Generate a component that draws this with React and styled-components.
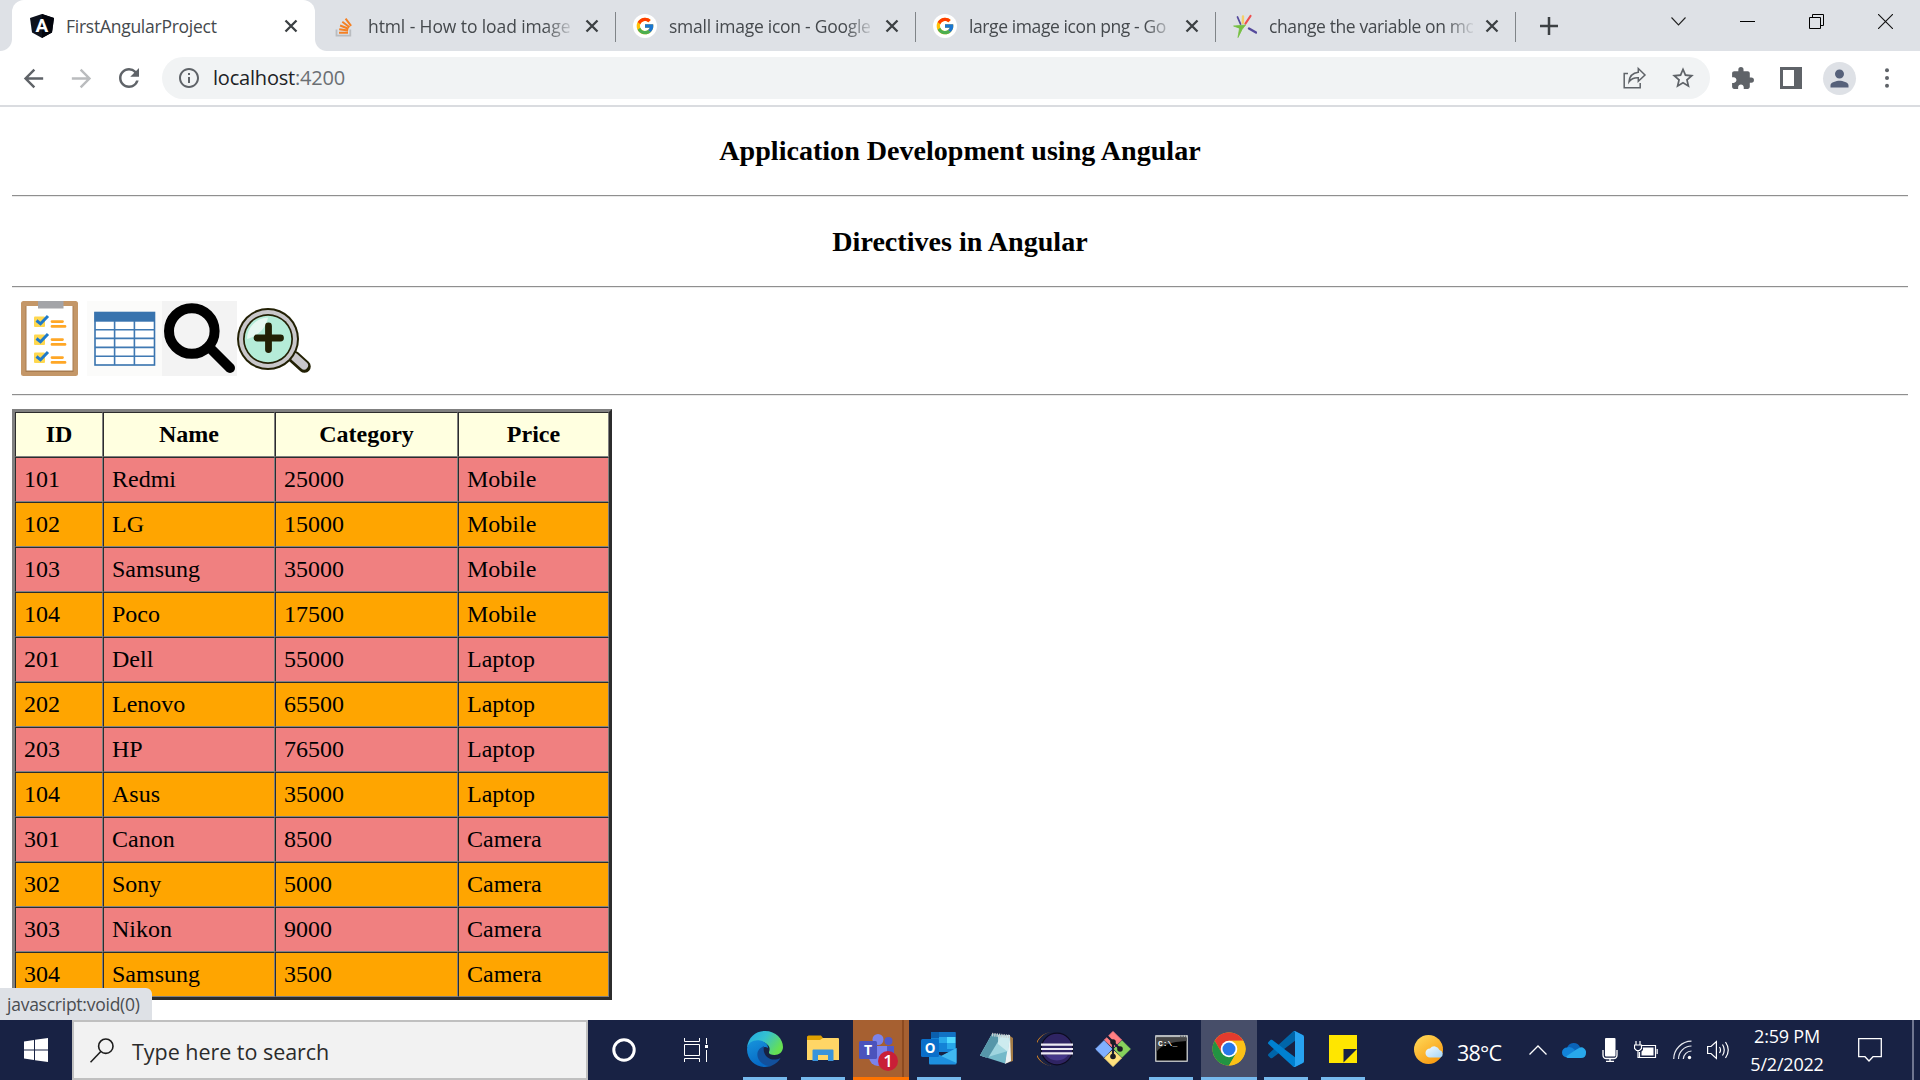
import React from "react";
import styled, { createGlobalStyle } from "styled-components";
import { FcGoogle } from "react-icons/fc";
import {
  MdArrowBack,
  MdArrowForward,
  MdRefresh,
  MdInfoOutline,
  MdStarBorder,
  MdExtension,
  MdPerson,
} from "react-icons/md";

const GlobalStyle = createGlobalStyle`
  * { box-sizing: border-box; }
  html, body { margin: 0; padding: 0; background: #fff; overflow: hidden; }
  svg { display: block; flex: none; }
`;

const ui = `"Open Sans", "Noto Sans", sans-serif`;

const Screen = styled.div`
  width: 1920px;
  height: 1080px;
  display: flex;
  flex-direction: column;
  overflow: hidden;
  font-family: ${ui};
`;

/* ---------- tab strip ---------- */
const TabStrip = styled.header`
  display: flex;
  flex: none;
  height: 51px;
  padding-left: 12px;
  background: #dee1e6;
`;

const ActiveTab = styled.div`
  position: relative;
  display: flex;
  align-items: center;
  width: 303px;
  padding: 0 17px 0 18px;
  gap: 12px;
  background: #fff;
  border-radius: 12px 12px 0 0;
  &::before,
  &::after {
    content: "";
    position: absolute;
    bottom: 0;
    width: 12px;
    height: 12px;
  }
  &::before {
    left: -12px;
    background: radial-gradient(circle at 0 0, #dee1e6 11.5px, #fff 12.5px);
  }
  &::after {
    right: -12px;
    background: radial-gradient(circle at 100% 0, #dee1e6 11.5px, #fff 12.5px);
  }
`;

const Tab = styled.div`
  display: flex;
  align-items: center;
  width: ${(p) => p.$width || 300}px;
  padding: 0 17px;
  gap: 12px;
  background: linear-gradient(#808488, #808488) right 0 top 12px / 1px 30px no-repeat;
`;

const TabTitle = styled.div`
  flex: 1;
  min-width: 0;
  overflow: hidden;
  white-space: nowrap;
  font-size: 17.5px;
  line-height: 26px;
  letter-spacing: ${(p) => p.$spacing || "-0.26px"};
  color: #45494d;
  ${(p) =>
    p.$fade && `mask-image: linear-gradient(to right, #000 calc(100% - 28px), transparent calc(100% + 3px));`}
`;

const NewTab = styled.div`
  display: flex;
  align-items: center;
  padding-left: 24px;
`;

const WindowControls = styled.div`
  display: flex;
  margin-left: auto;
  height: 43px;
`;

const WindowButton = styled.div`
  width: 69px;
  display: flex;
  align-items: center;
  justify-content: center;
`;

/* ---------- toolbar ---------- */
const Toolbar = styled.div`
  display: flex;
  flex: none;
  align-items: center;
  height: 56px;
  padding: 0 9px;
  border-bottom: 2px solid #dadce0;
  background: #fff;
`;

const ToolSlot = styled.div`
  display: flex;
  align-items: center;
  justify-content: center;
  width: ${(p) => p.$width || 48}px;
  color: ${(p) => p.$color || "#5f6368"};
`;

const AddressBar = styled.div`
  display: flex;
  align-items: center;
  width: 1548px;
  height: 42px;
  margin-left: 9px;
  padding: 0 3px 0 15px;
  border-radius: 21px;
  background: #f1f3f4;
  color: #5f6368;
`;

const Url = styled.div`
  flex: 1;
  margin-left: 12px;
  font-size: 20px;
  line-height: 28px;
  letter-spacing: -0.2px;
  color: #6b6f73;
  span { color: #202124; }
`;

const Avatar = styled.div`
  width: 33px;
  height: 33px;
  border-radius: 50%;
  display: flex;
  align-items: center;
  justify-content: center;
  background: #dee1e6;
  color: #56617a;
`;

/* ---------- page ---------- */
const Page = styled.main`
  position: relative;
  flex: 1;
  min-height: 0;
  overflow: hidden;
  padding: 28px 12px 0;
  background: #fff;
  color: #000;
  font-family: "Liberation Serif", "Times New Roman", serif;
`;

const Heading = styled.h3`
  margin: 0;
  height: 32px;
  line-height: 32px;
  font-size: 28.08px;
  text-align: center;
`;

const Rule = styled.hr`
  height: 2px;
  border: 0;
  border-top: 1px solid #8f8f8f;
  border-bottom: 1px solid #eaeaea;
  margin: ${(p) => p.$top}px 0 ${(p) => p.$bottom}px;
`;

const IconRow = styled.div`
  display: flex;
  height: 75px;
`;

const Table = styled.table`
  width: 600px;
  table-layout: fixed;
  border-collapse: separate;
  border-spacing: 0;
  border-style: solid;
  border-width: 3px;
  border-color: #808080 #2c2c2c #2c2c2c #808080;
  font-size: 24px;
`;

const Row = styled.tr`
  height: 45px;
  background: ${(p) => p.$bg};
`;

const cell = `
  border: 1px solid;
  border-color: #2c2c2c #808080 #808080 #2c2c2c;
  padding: 0 8px 1px;
  line-height: 26px;
  height: 45px;
`;
const Th = styled.th`${cell} width: ${(p) => p.$width}px; text-align: center;`;
const Td = styled.td`${cell}`;

const StatusBubble = styled.div`
  position: absolute;
  left: 0;
  bottom: 0;
  width: 152px;
  height: 32px;
  padding-left: 7px;
  border-radius: 0 6px 0 0;
  background: #dee1e6;
  color: #4a4d51;
  font-family: ${ui};
  font-size: 17.5px;
  line-height: 33px;
  letter-spacing: -0.25px;
  white-space: nowrap;
`;

/* ---------- taskbar ---------- */
const Taskbar = styled.footer`
  display: flex;
  flex: none;
  height: 60px;
  background: #182244;
  color: #fff;
`;

const Slot = styled.div`
  display: flex;
  align-items: center;
  justify-content: center;
  width: ${(p) => p.$width}px;
`;

const SearchBox = styled.div`
  display: flex;
  align-items: center;
  width: 516px;
  padding-left: 16px;
  border: 2px solid #c0c0c0;
  background: #f2f2f2;
  color: #2b2b2b;
  font-size: 21.5px;
  letter-spacing: -0.03px;
  gap: 18px;
  span { padding-top: 3px; }
`;

const Apps = styled.div`
  display: flex;
  margin-left: 5px;
`;

const TaskButton = styled.div`
  display: grid;
  grid-template-rows: 57px 3px;
  justify-items: center;
  align-items: center;
  width: 56px;
  margin-right: ${(p) => (p.$tight ? 1 : 2)}px;
  background: ${(p) => p.$bg || "transparent"};
`;

const Underline = styled.div`
  width: ${(p) => p.$width || 44}px;
  height: 3px;
  background: ${(p) => p.$color || "#76b9ed"};
`;

const Weather = styled.div`
  display: flex;
  align-items: center;
  width: 146px;
  padding-left: 41px;
  gap: 12px;
  font-size: 21.5px;
  letter-spacing: -0.8px;
  white-space: nowrap;
  span { padding-top: 5px; }
`;

const Clock = styled.div`
  width: 104px;
  padding: 2px 2px 0 0;
  text-align: center;
  font-size: 18px;
  line-height: 28px;
  letter-spacing: -0.2px;
`;

const DesktopEdge = styled.div`
  width: 8px;
  margin-left: auto;
  border-left: 2px solid #6f7690;
`;

/* ---------- drawings ---------- */
const Cross = () => (
  <svg width="14" height="14" viewBox="0 0 14 14" stroke="#3c4043" strokeWidth="2.3">
    <path d="M1.5 1.5 12.5 12.5M12.5 1.5 1.5 12.5" />
  </svg>
);

const AngularIcon = () => (
  <svg width="24" height="24" viewBox="0 0 24 24">
    <path d="M12 0 24 4 22 18.5 12 24 2 18.5 0 4Z" fill="#0d111c" />
    <path d="M12 0 24 4 22 18.5 12 24Z" fill="#02040c" />
    <text x="12" y="18" fontSize="19" fontWeight="700" fill="#fff" textAnchor="middle" fontFamily="Roboto">A</text>
  </svg>
);

const StackIcon = () => (
  <svg width="24" height="24" viewBox="0 0 24 24" fill="none">
    <path d="M4.5 15.500v6.200h13.800v-6.200" stroke="#b9bcc0" strokeWidth="1.8" />
    <path d="M7 18.700h9M7.200 15.300l8.900 1.300M8.100 11.500l8.400 3.200M10.300 7.800l7.200 5.400M13.600 4.600l5.500 7.200" stroke="#f48024" strokeWidth="2" />
  </svg>
);

const GoogleBadge = styled.div`
  width: 24px;
  height: 24px;
  flex: none;
  border-radius: 50%;
  background: #fff;
  display: flex;
  align-items: center;
  justify-content: center;
`;

const SparkIcon = () => (
  <svg width="24" height="24" viewBox="0 0 24 24" strokeLinecap="round">
    <path d="M4.500 3 7.500 10" stroke="#554a9c" strokeWidth="1.800" />
    <path d="M10 2.500 9.800 9" stroke="#f4d06a" strokeWidth="2.400" />
    <path d="M17.500 2 12.500 9.500" stroke="#ee4f4f" strokeWidth="2.200" />
    <path d="M16 14.500 23 18.500" stroke="#554a9c" strokeWidth="2.400" />
    <path d="M1 12 12.500 11 9 15.500 5 23.500 6.500 14.500Z" fill="#76c043" stroke="#76c043" strokeWidth=".8" />
  </svg>
);

const ShareIcon = () => (
  <svg width="24" height="24" viewBox="0 0 24 24" fill="none" stroke="#5f6368" strokeWidth="1.5">
    <path d="M5 7.500H1.200v14.300h16V17" />
    <path d="M15.300 2.500 22 9l-6.700 6.300v-3.600c-4.300-.2-7.200 1-9.300 4.100.5-5.800 4-8.900 9.300-9.500Z" />
  </svg>
);

const Clipboard = () => (
  <svg width="75" height="75" viewBox="0 0 75 75">
    <rect x="9" y="0" width="57" height="75" rx="2.5" fill="#c49768" />
    <rect x="13.500" y="5" width="48" height="66" fill="#a87c50" />
    <rect x="14.500" y="5" width="46" height="64.500" fill="#fff" />
    <rect x="26" y="0" width="25.500" height="7.500" fill="#a3a4a8" />
    {[0, 18, 36].map((y) => (
      <g key={y} transform={`translate(0 ${y})`} fill="none">
        <rect x="22" y="15.500" width="11" height="10.500" rx="1" fill="#ffd84f" />
        <path d="M24.500 19.500 28.500 22.800 36 15" stroke="#1f7ac9" strokeWidth="3" />
        <path d="M40 20.600h10.500M40 25.400h13" stroke="#ffa726" strokeWidth="2.800" strokeLinecap="round" />
      </g>
    ))}
  </svg>
);

const GridImage = () => (
  <svg width="75" height="75" viewBox="0 0 75 75">
    <rect width="75" height="75" fill="#fbfbfa" />
    <rect x="8" y="11.500" width="59.500" height="52.500" fill="#fff" stroke="#3873ae" strokeWidth="1.600" />
    <rect x="7.500" y="11" width="60.500" height="9.700" fill="#3873ae" />
    <path d="M27.600 20V64M47.400 20V64M8 28.800H68M8 37.400H68M8 46.400H68M8 55.200H68" stroke="#3f79b3" strokeWidth="1.600" />
  </svg>
);

const SearchImage = () => (
  <svg width="75" height="75" viewBox="0 0 75 75" fill="none" stroke="#000">
    <rect width="75" height="75" fill="#f3f3f3" stroke="none" />
    <circle cx="29.800" cy="30" r="22.800" strokeWidth="10" />
    <path d="M48 47 68 67" strokeWidth="10" strokeLinecap="round" />
    <path d="M44 44 52 52" strokeWidth="7" />
  </svg>
);

const ZoomImage = () => (
  <svg width="75" height="75" viewBox="0 0 75 75" fill="none" strokeLinecap="round">
    <path d="M57 56 67.500 65.500" stroke="#222004" strokeWidth="12.500" />
    <path d="M52 51 56 55" stroke="#222004" strokeWidth="6" />
    <path d="M57.500 56 67 64.500" stroke="#c9c7ca" strokeWidth="8" />
    <circle cx="31" cy="38" r="31" fill="#222004" />
    <circle cx="31" cy="38" r="29" fill="#c9c7ca" />
    <circle cx="31" cy="38" r="25" fill="#222004" />
    <circle cx="31" cy="38" r="23.300" fill="#b5ecd8" />
    <path d="M10 38A21.500 21.500 0 0 1 31 16.500C29 27 21 35 10 38Z" fill="#e6f8f1" />
    <path d="M20 37H43.500M31.500 25V48.500" stroke="#222004" strokeWidth="6.800" />
  </svg>
);

const EdgeIcon = () => (
  <svg width="36" height="36" viewBox="0 0 36 36">
    <defs>
      <linearGradient id="edgeTop" x1="0" y1="0" x2="1" y2=".5">
        <stop offset="0" stopColor="#1fa7e6" /><stop offset=".5" stopColor="#35c1d0" /><stop offset="1" stopColor="#66e052" />
      </linearGradient>
      <linearGradient id="edgeLeft" x1="0" y1="0" x2=".4" y2="1">
        <stop offset="0" stopColor="#1794dc" /><stop offset="1" stopColor="#0669c5" />
      </linearGradient>
    </defs>
    <path d="M0 17C1 6 9 0 18 0c11 0 18 8 18 16 0 5-4 8-8.500 8-4 0-6-1.500-5.500-3 2-5-1-8-6-10C9 9 3 11 0 17Z" fill="url(#edgeTop)" />
    <path d="M0 18C1 11 7 8.500 13 9.500c5 1 8 4 8 7.500-5-3-9 2-8 7 1 6 6 11 12 10.500C15 39 0 33 0 18Z" fill="url(#edgeLeft)" />
    <path d="M17 15c-5 2-8 6-6 12 2 5 8 9 14 7.500 4-1.500 7-4.500 8.500-7.500-5 2.500-10 2-13.500-1-3-3-4-7-3-11Z" fill="#12509c" />
  </svg>
);

const FolderIcon = () => (
  <svg width="32" height="27" viewBox="0 0 32 27">
    <path d="M0 1.500 1.500.500H14L16 3V8H0Z" fill="#e0a100" />
    <path d="M0 5H13L16 3H31Q32 3 32 4V25H0Z" fill="#ffd666" />
    <path d="M5.500 26V15.500Q5.500 14.500 6.500 14.500H25.500Q26.500 14.500 26.500 15.500V26H21V20H11V26Z" fill="#3a94db" />
  </svg>
);

const TeamsIcon = () => (
  <svg width="56" height="57" viewBox="0 0 56 57">
    <rect x="49" width="2" height="57" fill="#8c4a20" />
    <circle cx="25" cy="19.500" r="5.500" fill="#7b83eb" />
    <circle cx="35.500" cy="21" r="4" fill="#5059c9" />
    <path d="M29 26H41V37Q38 42 31 40Z" fill="#5059c9" />
    <path d="M16 26H34V37A9 9 0 0 1 16 37Z" fill="#7b83eb" />
    <rect x="6" y="21" width="18" height="18" rx="1.500" fill="#4b53bc" />
    <text x="15" y="35" textAnchor="middle" fontSize="14" fontWeight="700" fill="#fff" fontFamily="Open Sans">T</text>
    <circle cx="35" cy="41" r="10" fill="#c91f37" />
    <text x="35" y="47" textAnchor="middle" fontSize="17" fontWeight="600" fill="#fff" fontFamily="Open Sans">1</text>
  </svg>
);

const OutlookIcon = () => (
  <svg width="36" height="33" viewBox="0 0 36 33">
    <rect x="10" y="0" width="24.500" height="20" rx="1" fill="#1482d6" />
    <path d="M18 5h8v6h-8z" fill="#28a8ea" /><path d="M18 0h16.500v5H18z" fill="#1172c4" />
    <path d="M26 5h8.500v6H26z" fill="#50d9ff" /><path d="M18 11h8v6h-8z" fill="#1482d6" />
    <path d="M26 11h8.500v6H26z" fill="#28a8ea" /><path d="M10 0h8v6h-8z" fill="#0b5fad" />
    <path d="M8 18 21 24 35.500 16V31.500Q35.500 32.500 34 32.500H9Q8 32.500 8 31Z" fill="#1d90df" />
    <path d="M35.500 16V31L20 24Z" fill="#40b8f0" />
    <rect x="0" y="7" width="18" height="18" rx="1.500" fill="#0a6fca" />
    <text x="9" y="21" textAnchor="middle" fontSize="13.500" fontWeight="700" fill="#fff" fontFamily="Open Sans">O</text>
  </svg>
);

const NotepadIcon = () => (
  <svg width="34" height="33" viewBox="0 0 34 33">
    <path d="M30 4 33 6V29L27 31Z" fill="#a37b45" />
    <path d="M30 3 31 29 25 32 27 3Z" fill="#edf2f3" />
    <path d="M12 2 30 4 25 31.500 0 23.500Z" fill="#74b9c9" />
    <path d="M12 2 30 4 28 19 6 25.500 0 23.500Z" fill="#9fd5df" />
    <path d="M12 2 22 3 8 26 0 23.500Z" fill="#377b91" opacity=".7" />
    <path d="M18 3 30 4 28 20 18 12Z" fill="#d8f0f3" opacity=".8" />
    <path d="M12 2.500 30 4.500" stroke="#c9d0d2" strokeWidth="3.500" strokeDasharray="1.300 1" />
  </svg>
);

const EclipseIcon = () => (
  <svg width="36" height="34" viewBox="0 0 36 34">
    <path d="M16 0A18 17 0 0 0 16 34 17 17 0 0 1 16 0Z" fill="#f7941e" />
    <circle cx="20" cy="17" r="15.800" fill="#2f2463" stroke="#0d0b20" strokeWidth="1.200" />
    <path d="M9 23H31A12 9 0 0 1 9 23Z" fill="#453789" />
    <path d="M4 12.600H36M4 17H36M4 21.300H36" stroke="#eeeaf4" strokeWidth="2.200" />
  </svg>
);

const GitIcon = () => (
  <svg width="36" height="36" viewBox="0 0 36 36">
    <g strokeLinejoin="round" strokeWidth="1">
      <path d="M18 .5 26.500 9 18 17 9.500 9Z" fill="#ff7f83" stroke="#ff7f83" />
      <path d="M9 9.700 17 18 9 26.300.7 18Z" fill="#80b0ff" stroke="#80b0ff" />
      <path d="M27 9.700 35.300 18 27 26.300 19 18Z" fill="#87d25c" stroke="#87d25c" />
      <path d="M18 19 26.500 27 18 35.500 9.500 27Z" fill="#ffe17d" stroke="#ffe17d" />
    </g>
    <path d="M12 5 18 11V25M18 11 25 18" stroke="#1b2038" strokeWidth="2.200" fill="none" />
    <g fill="#1b1b24"><circle cx="18" cy="11" r="2.800" /><circle cx="25" cy="18" r="2.800" /><circle cx="18" cy="25.500" r="2.800" /></g>
  </svg>
);

const CmdIcon = () => (
  <svg width="33" height="27" viewBox="0 0 33 27">
    <rect width="33" height="27" rx="1" fill="#b6babd" />
    <rect x="1.500" y="2.500" width="30" height="23" fill="#000" />
    <path d="M1.500 2.500H31.500V6Q8 7 1.500 17Z" fill="#454545" />
    <path d="M25 1.200H31" stroke="#4b5057" strokeWidth="1" strokeDasharray="1.500 1" />
    <text x="3" y="10.500" fontSize="8" fontWeight="700" fill="#fff" fontFamily="Liberation Mono">C:\_</text>
  </svg>
);

const ChromeIcon = () => (
  <svg width="34" height="34" viewBox="0 0 34 34">
    <circle cx="17" cy="17" r="16.500" fill="#fbc116" />
    <path d="M2.700 8.700A16.500 16.500 0 0 1 31.300 8.700H17L9.800 21.200Z" fill="#e33b2e" />
    <path d="M2.700 8.700A16.500 16.500 0 0 0 17 33.500L24.200 21.200H9.900Z" fill="#229342" />
    <path d="M17 8.700H31.300A16.500 16.500 0 0 1 17 33.500L24.200 21.200Z" fill="#fbc116" />
    <circle cx="17" cy="17" r="8.300" fill="#fff" />
    <circle cx="17" cy="17" r="6.500" fill="#2878ea" />
  </svg>
);

const CodeIcon = () => (
  <svg width="36" height="36" viewBox="0 0 100 100">
    <path fill="#0065A9" d="M96.461 10.796 75.857.876C73.472-.273 70.622.212 68.750 2.083L1.299 63.583c-1.815 1.654-1.813 4.511.004 6.162l5.510 5.009c1.485 1.350 3.722 1.450 5.321.237L93.361 13.370C96.086 11.303 100 13.246 100 16.667v-.24c0-2.400-1.375-4.589-3.539-5.631Z" />
    <path fill="#0080d0" d="M96.461 89.204 75.857 99.125c-2.385 1.148-5.235.663-7.107-1.208L1.299 36.417c-1.815-1.654-1.813-4.511.004-6.162l5.510-5.009c1.485-1.350 3.722-1.450 5.321-.237L93.361 86.630C96.086 88.697 100 86.754 100 83.333v.24c0 2.400-1.375 4.589-3.539 5.631Z" />
    <path fill="#27a3f1" d="M75.858 99.126c-2.386 1.148-5.236.663-7.108-1.209C71.056 100.223 75 98.590 75 95.328V4.672C75 1.410 71.056-.223 68.750 2.083 70.622.211 73.472-.274 75.858.874l20.601 9.907C98.623 11.822 100 14.011 100 16.413v67.174c0 2.402-1.377 4.592-3.541 5.633Z" />
  </svg>
);

const StickyIcon = () => (
  <svg width="28" height="28" viewBox="0 0 28 28">
    <rect width="28" height="28" fill="#ffe600" />
    <path d="M14.500 14H28L14.500 27.500Z" fill="#182244" />
  </svg>
);

const WeatherIcon = () => (
  <svg width="31" height="30" viewBox="0 0 31 30">
    <defs>
      <linearGradient id="sun" x1="0" y1="0" x2=".7" y2="1"><stop offset="0" stopColor="#ffdc5c" /><stop offset="1" stopColor="#f99b12" /></linearGradient>
      <linearGradient id="cloud" x1="0" y1="0" x2="1" y2="1"><stop offset="0" stopColor="#f4fbff" /><stop offset="1" stopColor="#a5d5f6" /></linearGradient>
    </defs>
    <circle cx="14.500" cy="14.500" r="14.500" fill="url(#sun)" />
    <path d="M16 22.500a4.500 4.500 0 0 1 0-9 5.500 5.500 0 0 1 9.500 1.500 4 4 0 0 1 1 7.500Z" fill="url(#cloud)" />
  </svg>
);

const tabs = [
  { title: "html - How to load image", icon: <StackIcon />, width: 301, spacing: "-0.1px" },
  { title: "small image icon - Google", icon: <GoogleBadge><FcGoogle size={20} /></GoogleBadge> },
  { title: "large image icon png - Go", icon: <GoogleBadge><FcGoogle size={20} /></GoogleBadge>, spacing: "-0.4px" },
  { title: "change the variable on mo", icon: <SparkIcon />, spacing: "-0.4px" },
];

const rows = [
  ["101", "Redmi", "25000", "Mobile"],
  ["102", "LG", "15000", "Mobile"],
  ["103", "Samsung", "35000", "Mobile"],
  ["104", "Poco", "17500", "Mobile"],
  ["201", "Dell", "55000", "Laptop"],
  ["202", "Lenovo", "65500", "Laptop"],
  ["203", "HP", "76500", "Laptop"],
  ["104", "Asus", "35000", "Laptop"],
  ["301", "Canon", "8500", "Camera"],
  ["302", "Sony", "5000", "Camera"],
  ["303", "Nikon", "9000", "Camera"],
  ["304", "Samsung", "3500", "Camera"],
];

const apps = [
  { icon: <EdgeIcon />, line: true },
  { icon: <FolderIcon />, line: true },
  { icon: <TeamsIcon />, line: true, bg: "#a66031", color: "#ff7300", width: 56 },
  { icon: <OutlookIcon />, line: true },
  { icon: <NotepadIcon /> },
  { icon: <EclipseIcon /> },
  { icon: <GitIcon /> },
  { icon: <CmdIcon />, line: true },
  { icon: <ChromeIcon />, line: true, bg: "#474e69", width: 56, tight: true },
  { icon: <CodeIcon />, line: true, tight: true },
  { icon: <StickyIcon />, line: true },
];

export default function App() {
  return (
    <Screen>
      <GlobalStyle />
      <TabStrip>
        <ActiveTab>
          <AngularIcon />
          <TabTitle>FirstAngularProject</TabTitle>
          <Cross />
        </ActiveTab>
        {tabs.map((t) => (
          <Tab key={t.title} $width={t.width}>
            {t.icon}
            <TabTitle $fade $spacing={t.spacing}>{t.title}</TabTitle>
            <Cross />
          </Tab>
        ))}
        <NewTab>
          <svg width="18" height="18" viewBox="0 0 18 18" stroke="#3c4043" strokeWidth="2.500">
            <path d="M9 0V18M0 9H18" />
          </svg>
        </NewTab>
        <WindowControls>
          <WindowButton>
            <svg width="15" height="9" viewBox="0 0 15 9" fill="none" stroke="#222" strokeWidth="1.100"><path d="M.5.5 7.500 8 14.500.5" /></svg>
          </WindowButton>
          <WindowButton>
            <svg width="15" height="1" viewBox="0 0 15 1"><path d="M0 0H15V1H0Z" /></svg>
          </WindowButton>
          <WindowButton>
            <svg width="15" height="15" viewBox="0 0 15 15" fill="none" stroke="#000"><path d="M.5 3.500H11.500V14.500H.5ZM3.500 3.500V.5H14.500V11.500H11.500" /></svg>
          </WindowButton>
          <WindowButton>
            <svg width="15" height="15" viewBox="0 0 15 15" stroke="#111" strokeWidth="1.100"><path d="M0 0 15 15M15 0 0 15" /></svg>
          </WindowButton>
        </WindowControls>
      </TabStrip>

      <Toolbar>
        <ToolSlot><MdArrowBack size={29} /></ToolSlot>
        <ToolSlot $color="#babcbe"><MdArrowForward size={29} /></ToolSlot>
        <ToolSlot><MdRefresh size={30} /></ToolSlot>
        <AddressBar>
          <MdInfoOutline size={24} />
          <Url><span>localhost</span>:4200</Url>
          <ToolSlot><ShareIcon /></ToolSlot>
          <ToolSlot><MdStarBorder size={26} /></ToolSlot>
        </AddressBar>
        <ToolSlot $width={65}><MdExtension size={25} /></ToolSlot>
        <ToolSlot $width={32}>
          <svg width="22" height="22" viewBox="0 0 22 22"><path fillRule="evenodd" d="M0 0H22V22H0ZM3 3V19H14V3Z" fill="#5f6368" /></svg>
        </ToolSlot>
        <ToolSlot $width={65}><Avatar><MdPerson size={27} /></Avatar></ToolSlot>
        <ToolSlot $width={30}>
          <svg width="4" height="20" viewBox="0 0 4 20" fill="#5f6368"><circle cx="2" cy="2.200" r="2" /><circle cx="2" cy="10" r="2" /><circle cx="2" cy="17.800" r="2" /></svg>
        </ToolSlot>
      </Toolbar>

      <Page>
        <Heading>Application Development using Angular</Heading>
        <Rule $top={28} $bottom={29} />
        <Heading>Directives in Angular</Heading>
        <Rule $top={28} $bottom={13} />
        <IconRow>
          <Clipboard />
          <GridImage />
          <SearchImage />
          <ZoomImage />
        </IconRow>
        <Rule $top={18} $bottom={13} />
        <Table>
          <thead>
            <Row $bg="lightyellow">
              <Th $width={88}>ID</Th>
              <Th $width={172}>Name</Th>
              <Th $width={183}>Category</Th>
              <Th $width={151}>Price</Th>
            </Row>
          </thead>
          <tbody>
            {rows.map((r, i) => (
              <Row key={r[0] + r[1]} $bg={i % 2 ? "orange" : "lightcoral"}>
                {r.map((c, j) => <Td key={j}>{c}</Td>)}
              </Row>
            ))}
          </tbody>
        </Table>
        <StatusBubble>javascript:void(0)</StatusBubble>
      </Page>

      <Taskbar>
        <Slot $width={72}>
          <svg width="24" height="24" viewBox="0 0 24 24" fill="#fff">
            <path d="M0 3.500 10 2V11.500H0ZM11 1.800 24 0V11.500H11ZM0 12.500H10V22L0 20.500ZM11 12.500H24V24L11 22.200Z" />
          </svg>
        </Slot>
        <SearchBox>
          <svg width="24" height="25" viewBox="0 0 24 25" fill="none" stroke="#1c1c1c" strokeWidth="1.600">
            <circle cx="15.800" cy="8.200" r="7.200" /><path d="M10.800 13.500.5 24.300" />
          </svg>
          <span>Type here to search</span>
        </SearchBox>
        <Slot $width={72}>
          <svg width="24" height="24" viewBox="0 0 24 24"><circle cx="12" cy="12" r="10.200" fill="none" stroke="#fff" strokeWidth="3" /></svg>
        </Slot>
        <Slot $width={72}>
          <svg width="24" height="24" viewBox="0 0 24 24" fill="none" stroke="#fff">
            <path d="M.5 0V3.500H15.500V0M.5 24V20.500H15.500V24M.5 6.500H15.500V17.500H.5ZM22.500 0V6M22.500 12V24" />
            <path d="M21 7H24V10H21Z" fill="#fff" stroke="none" />
          </svg>
        </Slot>
        <Apps>
          {apps.map((a, i) => (
            <TaskButton key={i} $bg={a.bg} $tight={a.tight}>
              {a.icon}
              {a.line && <Underline $width={a.width} $color={a.color} />}
            </TaskButton>
          ))}
        </Apps>
        <Weather><WeatherIcon /><span>38°C</span></Weather>
        <Slot $width={37}>
          <svg width="18" height="10" viewBox="0 0 18 10" fill="none" stroke="#fff" strokeWidth="1.300"><path d="M.5 9.500 9 1 17.500 9.500" /></svg>
        </Slot>
        <Slot $width={36}>
          <svg width="24" height="16" viewBox="0 0 24 16">
            <path d="M5 6A7 7 0 0 1 18 5L19 10H4Z" fill="#0a63b8" />
            <path d="M5 15.500A5 5 0 0 1 5 5.500Q9 4 13 8L7 15.500Z" fill="#1283d8" />
            <path d="M4 14.500 13.500 8 18 5.500A5 5 0 0 1 24 11Q24 16 19 16H5.500Z" fill="#28a8ea" />
          </svg>
        </Slot>
        <Slot $width={36}>
          <svg width="16" height="24" viewBox="0 0 16 24" fill="none" stroke="#fff" strokeWidth="1.300">
            <rect x="3" y="0" width="10.500" height="18.500" rx="1" fill="#fff" stroke="none" />
            <path d="M1 12V17Q1 20.500 4.500 20.500H11.500Q15 20.500 15 17V12M8 20V23M4 23.400H12" />
          </svg>
        </Slot>
        <Slot $width={36}>
          <svg width="24" height="18" viewBox="0 0 24 18" fill="none" stroke="#fff" strokeWidth="1.200">
            <path d="M7 4.500H21.500V16.500H5.500V11M23.200 8V13" />
            <path d="M9 6.500H19.500V14.500H7.500V10.500L9 9Z" fill="#fff" stroke="none" />
            <path d="M2 0V4M6 0V4M.5 4H7.500V7.500L5.500 9.500H2.500L.5 7.500ZM4 9.500V16.500H6" />
          </svg>
        </Slot>
        <Slot $width={37}>
          <svg width="19" height="20" viewBox="0 0 19 20" fill="none" stroke="#e8eaf0" strokeWidth="1.200">
            <path d="M.7 19A18 18 0 0 1 18.500 1.200M5.500 19A13 13 0 0 1 18.500 6M10.300 19A8.500 8.500 0 0 1 18.500 11" />
            <circle cx="16.500" cy="17.500" r="1.700" fill="#fff" stroke="none" />
          </svg>
        </Slot>
        <Slot $width={35}>
          <svg width="23" height="20" viewBox="0 0 23 20" fill="none" stroke="#fff" strokeWidth="1.200">
            <path d="M.6 6.500H4L9.400 1.500V18.500L4 13.500H.6ZM12.500 7Q14.500 10 12.500 13M15.500 4.500Q19 10 15.500 15.500M18.500 2Q24 10 18.500 18" />
          </svg>
        </Slot>
        <Clock><div>2:59 PM</div><div>5/2/2022</div></Clock>
        <Slot $width={60}>
          <svg width="24" height="24" viewBox="0 0 24 24" fill="none" stroke="#fff" strokeWidth="1.300">
            <path d="M.7.7H23.300V18.700H15L11 23 7 18.700H.7Z" />
          </svg>
        </Slot>
        <DesktopEdge />
      </Taskbar>
    </Screen>
  );
}
